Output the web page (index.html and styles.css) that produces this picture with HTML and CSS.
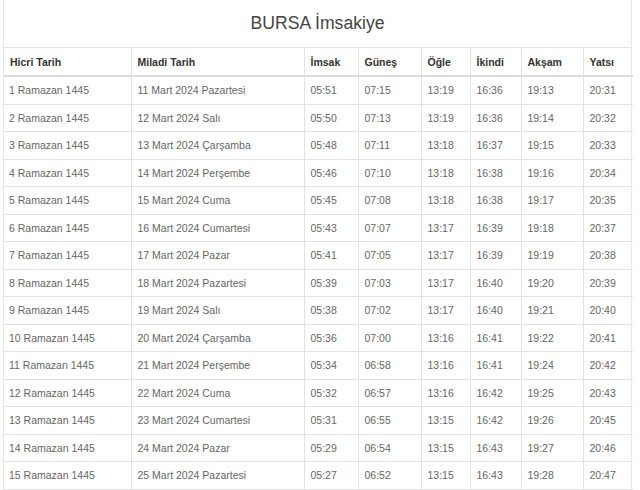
FILE: index.html
```html
<!DOCTYPE html>
<html lang="tr">
<head>
<meta charset="utf-8">
<title>BURSA İmsakiye</title>
<link rel="stylesheet" href="styles.css">
</head>
<body>
<div class="panel">
  <h2 class="title">BURSA İmsakiye</h2>
  <table class="times">
    <colgroup>
      <col class="c1"><col class="c2"><col class="c3"><col class="c4"><col class="c5"><col class="c6"><col class="c7"><col class="c8">
    </colgroup>
    <thead>
      <tr><th>Hicri Tarih</th><th>Miladi Tarih</th><th>İmsak</th><th>Güneş</th><th>Öğle</th><th>İkindi</th><th>Akşam</th><th>Yatsı</th></tr>
    </thead>
    <tbody>
      <tr><td>1 Ramazan 1445</td><td>11 Mart 2024 Pazartesi</td><td>05:51</td><td>07:15</td><td>13:19</td><td>16:36</td><td>19:13</td><td>20:31</td></tr>
      <tr><td>2 Ramazan 1445</td><td>12 Mart 2024 Salı</td><td>05:50</td><td>07:13</td><td>13:19</td><td>16:36</td><td>19:14</td><td>20:32</td></tr>
      <tr><td>3 Ramazan 1445</td><td>13 Mart 2024 Çarşamba</td><td>05:48</td><td>07:11</td><td>13:18</td><td>16:37</td><td>19:15</td><td>20:33</td></tr>
      <tr><td>4 Ramazan 1445</td><td>14 Mart 2024 Perşembe</td><td>05:46</td><td>07:10</td><td>13:18</td><td>16:38</td><td>19:16</td><td>20:34</td></tr>
      <tr><td>5 Ramazan 1445</td><td>15 Mart 2024 Cuma</td><td>05:45</td><td>07:08</td><td>13:18</td><td>16:38</td><td>19:17</td><td>20:35</td></tr>
      <tr><td>6 Ramazan 1445</td><td>16 Mart 2024 Cumartesi</td><td>05:43</td><td>07:07</td><td>13:17</td><td>16:39</td><td>19:18</td><td>20:37</td></tr>
      <tr><td>7 Ramazan 1445</td><td>17 Mart 2024 Pazar</td><td>05:41</td><td>07:05</td><td>13:17</td><td>16:39</td><td>19:19</td><td>20:38</td></tr>
      <tr><td>8 Ramazan 1445</td><td>18 Mart 2024 Pazartesi</td><td>05:39</td><td>07:03</td><td>13:17</td><td>16:40</td><td>19:20</td><td>20:39</td></tr>
      <tr><td>9 Ramazan 1445</td><td>19 Mart 2024 Salı</td><td>05:38</td><td>07:02</td><td>13:17</td><td>16:40</td><td>19:21</td><td>20:40</td></tr>
      <tr><td>10 Ramazan 1445</td><td>20 Mart 2024 Çarşamba</td><td>05:36</td><td>07:00</td><td>13:16</td><td>16:41</td><td>19:22</td><td>20:41</td></tr>
      <tr><td>11 Ramazan 1445</td><td>21 Mart 2024 Perşembe</td><td>05:34</td><td>06:58</td><td>13:16</td><td>16:41</td><td>19:24</td><td>20:42</td></tr>
      <tr><td>12 Ramazan 1445</td><td>22 Mart 2024 Cuma</td><td>05:32</td><td>06:57</td><td>13:16</td><td>16:42</td><td>19:25</td><td>20:43</td></tr>
      <tr><td>13 Ramazan 1445</td><td>23 Mart 2024 Cumartesi</td><td>05:31</td><td>06:55</td><td>13:15</td><td>16:42</td><td>19:26</td><td>20:45</td></tr>
      <tr><td>14 Ramazan 1445</td><td>24 Mart 2024 Pazar</td><td>05:29</td><td>06:54</td><td>13:15</td><td>16:43</td><td>19:27</td><td>20:46</td></tr>
      <tr><td>15 Ramazan 1445</td><td>25 Mart 2024 Pazartesi</td><td>05:27</td><td>06:52</td><td>13:15</td><td>16:43</td><td>19:28</td><td>20:47</td></tr>
    </tbody>
  </table>
</div>
</body>
</html>
```
FILE: styles.css
```css
html, body {
  margin: 0;
  padding: 0;
  background: #fff;
}
body {
  font-family: "Liberation Sans", Arial, sans-serif;
  font-size: 10.5px;
  color: #666;
}
.panel {
  margin-left: 3px;
  width: 629px;
  border-left: 1px solid #e6e6e6;
  border-right: 1px solid #e6e6e6;
  box-sizing: border-box;
}
.title {
  margin: 0;
  height: 48px;
  box-sizing: border-box;
  padding-top: 13px;
  font-size: 17.6px;
  font-weight: normal;
  line-height: 20px;
  color: #444;
  text-align: center;
  border-bottom: 1px solid #e3e3e3;
}
.times {
  width: 100%;
  border-collapse: collapse;
  table-layout: fixed;
}
.c1 { width: 127px; }
.c2 { width: 173px; }
.c3 { width: 54px; }
.c4 { width: 63px; }
.c5 { width: 49px; }
.c6 { width: 51px; }
.c7 { width: 62px; }
.c8 { width: 50px; }
.times th,
.times td {
  text-align: left;
  padding: 6px 6px;
  white-space: nowrap;
  border: 1px solid #e2e2e2;
}
.times tr > :first-child { border-left: none; }
.times tr > :last-child { border-right: none; }
.times th {
  font-weight: bold;
  color: #333;
  line-height: 14px;
  padding-top: 7px;
  border-top: none;
  border-bottom: 2px solid #dcdcdc;
}
.times td {
  line-height: 14.5px;
}
.times td:first-child { padding-left: 5px; }
```
